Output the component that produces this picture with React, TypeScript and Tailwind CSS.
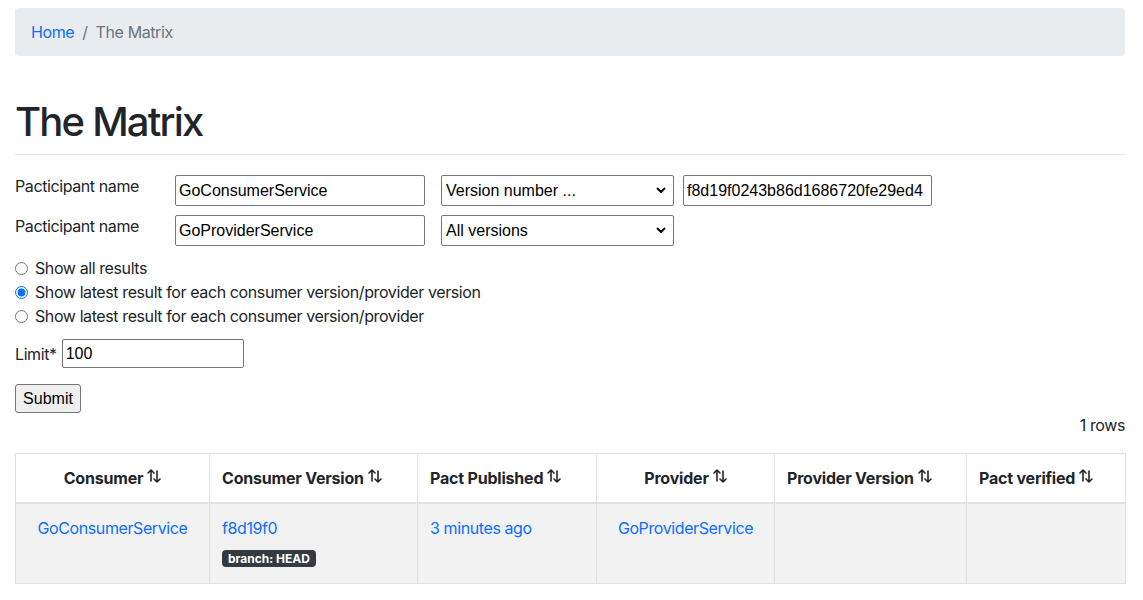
import React from 'react';

const body = { fontFamily: 'Inter, "Noto Sans", sans-serif' };
const ctrl = { fontFamily: '"Liberation Sans", Arial, sans-serif' };

function SortIcon() {
  return (
    <svg width="14" height="16" viewBox="0 0 14 16" className="inline-block ml-1 -mt-2 align-middle" fill="none" stroke="#212529" strokeWidth="1.6" strokeLinecap="round" strokeLinejoin="round">
      <path d="M4 13V2M1 5l3-3 3 3" />
      <path d="M10 3v11M7 11l3 3 3-3" />
    </svg>
  );
}

function Select({ value, width }: { value: string; width: string }) {
  return (
    <div className={`relative ${width}`}>
      <select
        defaultValue={value}
        style={ctrl}
        className="w-full h-[31px] appearance-none border border-[#767676] rounded-[2px] bg-white pl-[4px] pr-6 text-[16px] tracking-normal text-black"
      >
        <option>{value}</option>
      </select>
      <svg width="10" height="7" viewBox="0 0 10 7" className="absolute right-[8px] top-[12px] pointer-events-none" fill="none" stroke="#000" strokeWidth="1.8" strokeLinecap="round" strokeLinejoin="round">
        <path d="M1.5 1.5L5 5l3.5-3.5" />
      </svg>
    </div>
  );
}

export default function App() {
  const headers = [
    { label: 'Consumer', w: 'w-[194px]', center: true },
    { label: 'Consumer Version', w: 'w-[208px]', center: false },
    { label: 'Pact Published', w: 'w-[179px]', center: false },
    { label: 'Provider', w: 'w-[178px]', center: true },
    { label: 'Provider Version', w: 'w-[192px]', center: false },
    { label: 'Pact verified', w: 'w-[159px]', center: false },
  ];

  return (
    <div style={body} className="bg-white min-h-screen pl-[15px] pr-[18px] pt-2 pb-6 text-[16px] leading-6 tracking-[-0.4px] text-[#212529]">
      <nav className="bg-[#e9ecef] rounded-[4px] px-4 py-3 flex items-center">
        <a className="text-[#0d6efd]">Home</a>
        <span className="px-2 text-[#6c757d]">/</span>
        <span className="text-[#6c757d]">The Matrix</span>
      </nav>

      <h1 className="mt-[42px] text-[40px] leading-[48px] font-medium tracking-[-1.8px]">The Matrix</h1>
      <hr className="mt-2 border-0 border-t border-[#e5e5e5]" />

      <form className="mt-5">
        <div className="flex items-center">
          <label className="w-[160px] -mt-[9px]">Pacticipant name</label>
          <input style={ctrl} defaultValue="GoConsumerService" className="w-[250px] h-[31px] border border-[#767676] rounded-[2px] px-[3px] text-[16px] tracking-normal text-black" />
          <div className="ml-4">
            <Select value="Version number ..." width="w-[233px]" />
          </div>
          <input style={ctrl} defaultValue="f8d19f0243b86d1686720fe29ed4" className="ml-[9px] w-[249px] h-[31px] border border-[#767676] rounded-[2px] px-[3px] text-[16px] tracking-normal text-black" />
        </div>
        <div className="flex items-center mt-[9px]">
          <label className="w-[160px] -mt-[9px]">Pacticipant name</label>
          <input style={ctrl} defaultValue="GoProviderService" className="w-[250px] h-[31px] border border-[#767676] rounded-[2px] px-[3px] text-[16px] tracking-normal text-black" />
          <div className="ml-4">
            <Select value="All versions" width="w-[233px]" />
          </div>
        </div>

        <div className="mt-[10px] flex flex-col">
          {[
            { t: 'Show all results', c: false },
            { t: 'Show latest result for each consumer version/provider version', c: true },
            { t: 'Show latest result for each consumer version/provider', c: false },
          ].map((r) => (
            <label key={r.t} className="flex items-center h-6">
              <input type="radio" name="latestby" defaultChecked={r.c} className="m-0 w-[13px] h-[13px] accent-[#0d6efd]" />
              <span className="ml-[7px]">{r.t}</span>
            </label>
          ))}
        </div>

        <div className="mt-[11px] flex items-center">
          <label>Limit*</label>
          <input style={ctrl} defaultValue="100" className="ml-[5px] w-[182px] h-[29px] border border-[#767676] rounded-[2px] px-[3px] text-[16px] tracking-normal text-black" />
        </div>

        <button type="button" style={ctrl} className="mt-4 h-[29px] w-[66px] bg-[#efefef] border border-[#767676] rounded-[3px] text-[16px] tracking-normal text-black">
          Submit
        </button>
      </form>

      <div className="text-right">1 rows</div>

      <table className="mt-4 w-full border-collapse border border-[#dee2e6] table-fixed">
        <thead>
          <tr>
            {headers.map((h) => (
              <th key={h.label} className={`${h.w} ${h.center ? 'text-center' : 'text-left'} border border-[#dee2e6] border-b-2 border-b-[#dee2e6] px-3 py-3 font-bold tracking-[-0.2px]`}>
                {h.label}
                <SortIcon />
              </th>
            ))}
          </tr>
        </thead>
        <tbody>
          <tr className="bg-[#f2f2f2] align-top">
            <td className="border border-[#dee2e6] px-3 pt-3 text-center">
              <a className="text-[#0d6efd]">GoConsumerService</a>
            </td>
            <td className="border border-[#dee2e6] px-3 pt-3 pb-[14px]">
              <a className="text-[#0d6efd] block">f8d19f0</a>
              <span className="inline-block mt-[10px] bg-[#343a40] text-white text-[12px] leading-[17px] font-bold tracking-normal px-[6px] rounded-[4px]">
                branch: HEAD
              </span>
            </td>
            <td className="border border-[#dee2e6] px-3 pt-3">
              <a className="text-[#0d6efd]">3 minutes ago</a>
            </td>
            <td className="border border-[#dee2e6] px-3 pt-3 text-center">
              <a className="text-[#0d6efd]">GoProviderService</a>
            </td>
            <td className="border border-[#dee2e6] px-3 pt-3"></td>
            <td className="border border-[#dee2e6] px-3 pt-3"></td>
          </tr>
        </tbody>
      </table>
    </div>
  );
}
